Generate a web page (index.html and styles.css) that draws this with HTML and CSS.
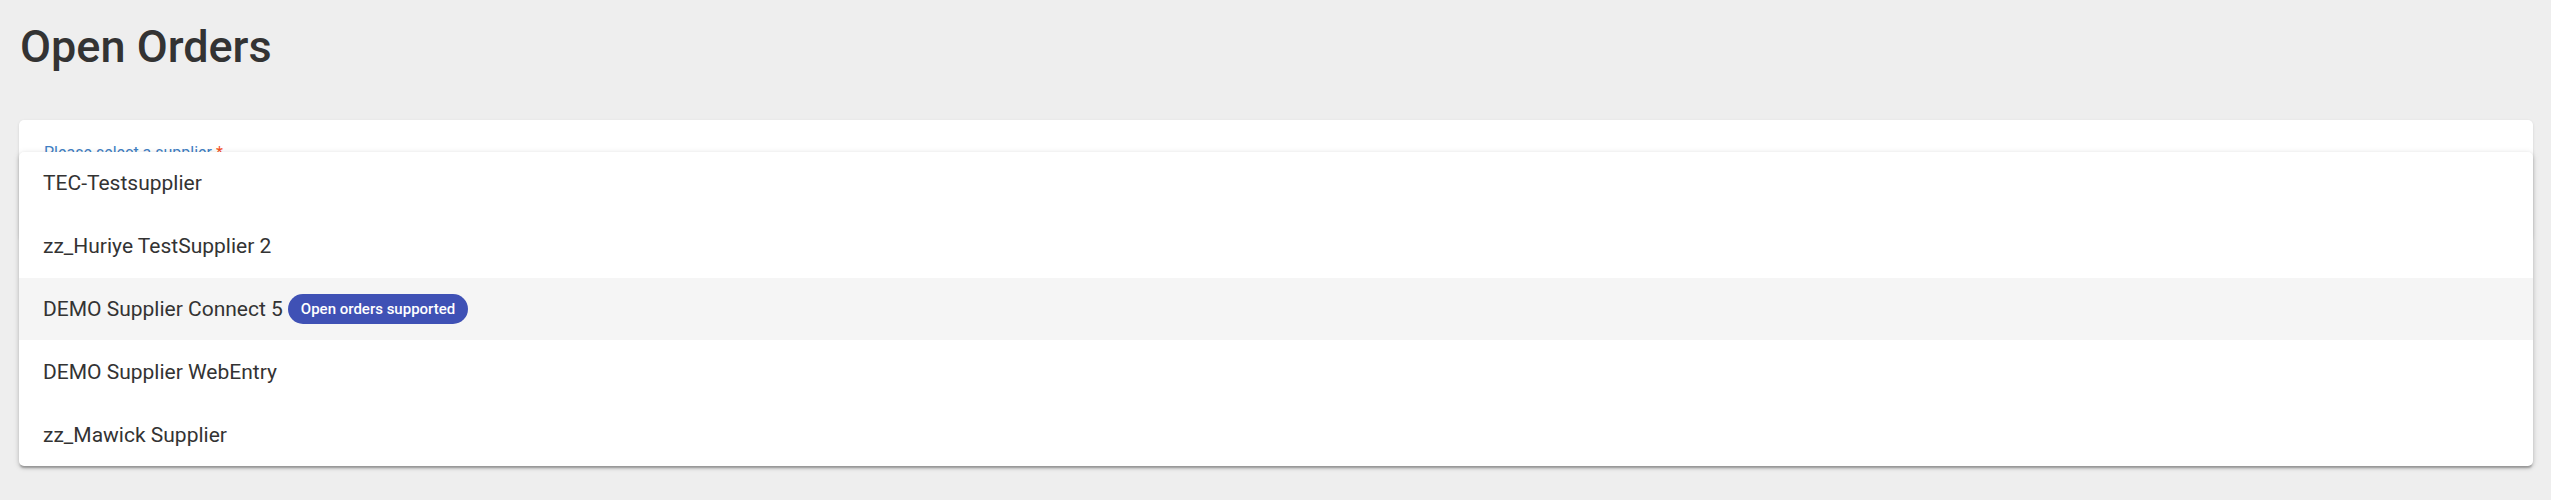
FILE: index.html
```html
<!DOCTYPE html>
<html lang="en">
<head>
<meta charset="utf-8">
<title>Open Orders</title>
<link rel="stylesheet" href="styles.css">
</head>
<body>
<main class="page">
  <h1 class="title">Open Orders</h1>
  <section class="card">
    <div class="field">
      <label class="field-label">Please select a supplier <span class="req">*</span></label>
    </div>
    <ul class="panel" role="listbox">
      <li class="option">TEC-Testsupplier</li>
      <li class="option">zz_Huriye TestSupplier 2</li>
      <li class="option active">DEMO Supplier Connect 5<span class="badge">Open orders supported</span></li>
      <li class="option">DEMO Supplier WebEntry</li>
      <li class="option">zz_Mawick Supplier</li>
    </ul>
  </section>
</main>
</body>
</html>
```

FILE: styles.css
```css
html, body {
  margin: 0;
  padding: 0;
  background: #eeeeee;
  font-family: Roboto, "Noto Sans", "Liberation Sans", sans-serif;
  color: #333333;
}

.page {
  padding: 0 18px 0 19px;
  height: 500px;
  box-sizing: border-box;
  overflow: hidden;
}

.title {
  margin: 0;
  padding: 20px 0 0 1px;
  font-size: 45px;
  font-weight: 500;
  line-height: 54px;
  height: 100px;
  box-sizing: border-box;
  color: #333333;
}

.card {
  position: relative;
  margin-top: 20px;
  background: #ffffff;
  border-radius: 5px;
  box-shadow: 0 1px 3px rgba(0,0,0,0.12);
  height: 120px;
}

.field {
  padding: 23px 24px 0 25px;
}

.field-label {
  display: block;
  font-size: 16px;
  line-height: 20px;
  color: #3f7fc4;
}

.req {
  color: #f4511e;
}

.panel {
  position: absolute;
  top: 32px;
  left: 0;
  right: 0;
  margin: 0;
  padding: 0;
  list-style: none;
  background: #ffffff;
  border-radius: 5px;
  box-shadow: 0 3px 2px -1px rgba(0,0,0,0.25), 0 2px 4px 0 rgba(0,0,0,0.14), 0 1px 7px 0 rgba(0,0,0,0.10);
  overflow: hidden;
}

.option {
  display: flex;
  align-items: center;
  height: 62.8px;
  padding: 0 24px;
  font-size: 21px;
  color: #333333;
}

.option.active {
  background: #f5f5f5;
}

.badge {
  margin-left: 5px;
  display: inline-flex;
  align-items: center;
  height: 30px;
  padding: 0 13px;
  border-radius: 15px;
  background: #3f51b5;
  color: #ffffff;
  font-size: 15px;
  font-weight: 500;
}
```
